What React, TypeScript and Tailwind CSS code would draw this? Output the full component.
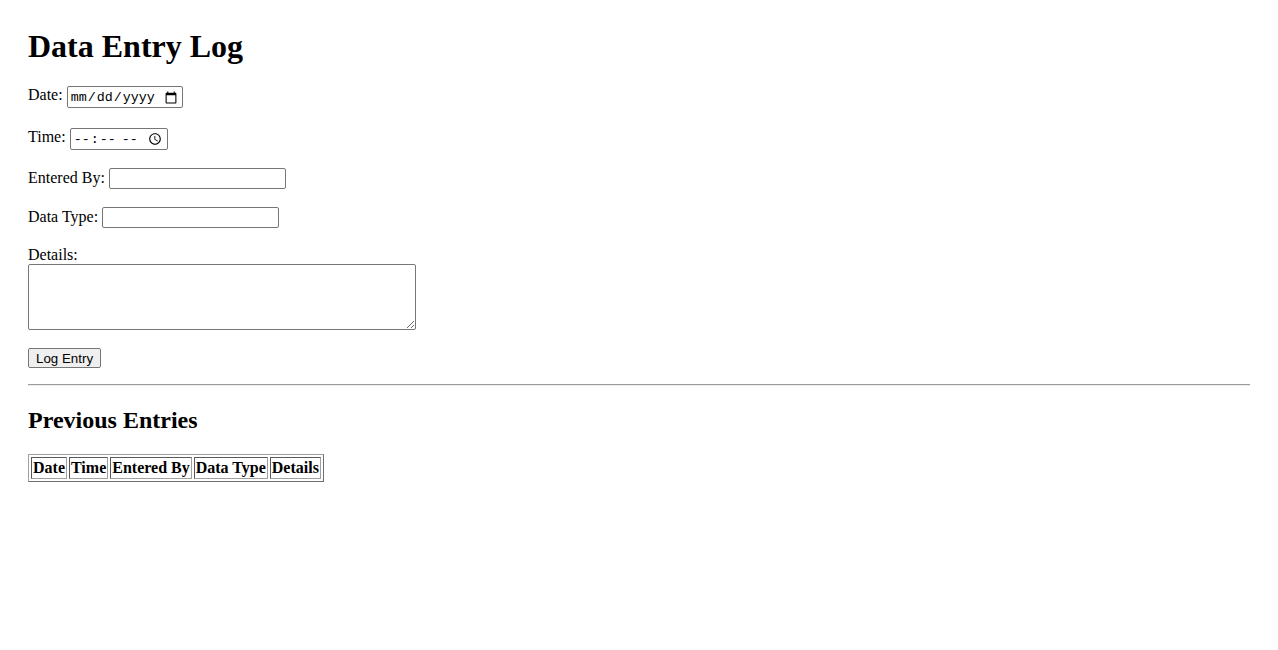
import React, { useState } from 'react';

type Entry = {
  date: string;
  time: string;
  enteredBy: string;
  dataType: string;
  details: string;
};

const boxBase =
  'border border-[#767676] rounded-[2px] bg-white text-black text-[13.333px] leading-[normal]';
const sansInput = boxBase + " font-['Liberation_Sans',Arial,sans-serif]";
const monoInput = boxBase + " font-['Liberation_Mono','Courier_New',monospace]";

export default function App() {
  const [entries, setEntries] = useState<Entry[]>([]);
  const [form, setForm] = useState<Entry>({
    date: '',
    time: '',
    enteredBy: '',
    dataType: '',
    details: ''
  });

  const handleSubmit = (e: React.FormEvent) => {
    e.preventDefault();
    setEntries([...entries, form]);
    setForm({ date: '', time: '', enteredBy: '', dataType: '', details: '' });
  };

  const cell =
    'border border-t-[#5a5a5a] border-l-[#5a5a5a] border-r-[#a0a0a0] border-b-[#a0a0a0] p-[1px]';

  return (
    <div className="min-h-screen bg-white text-black px-[28px] pt-[28px] font-['Liberation_Serif','Times_New_Roman',serif] text-[16px] leading-[normal]">
      <h1 className="text-[32px] font-bold leading-[normal] mb-[21.44px]">Data Entry Log</h1>

      <form onSubmit={handleSubmit}>
        <label>Date:</label>{' '}
        <input
          type="date"
          value={form.date}
          onChange={(e) => setForm({ ...form, date: e.target.value })}
          className={monoInput + ' w-[116px] h-[22px] px-[2px] mb-[2px]'}
        />
        <br />
        <br />
        <label>Time:</label>{' '}
        <input
          type="time"
          value={form.time}
          onChange={(e) => setForm({ ...form, time: e.target.value })}
          className={monoInput + ' w-[98px] h-[22px] px-[2px]'}
        />
        <br />
        <br />
        <label>Entered By:</label>{' '}
        <input
          type="text"
          value={form.enteredBy}
          onChange={(e) => setForm({ ...form, enteredBy: e.target.value })}
          className={sansInput + ' w-[177px] h-[21px] px-[2px] py-[1px]'}
        />
        <br />
        <br />
        <label>Data Type:</label>{' '}
        <input
          type="text"
          value={form.dataType}
          onChange={(e) => setForm({ ...form, dataType: e.target.value })}
          className={sansInput + ' w-[177px] h-[21px] px-[2px] py-[1px]'}
        />
        <br />
        <br />
        <label>Details:</label>
        <br />
        <textarea
          value={form.details}
          onChange={(e) => setForm({ ...form, details: e.target.value })}
          className={monoInput + ' w-[388px] h-[66px] p-[2px] resize align-bottom'}
        />
        <br />
        <br />
        <button
          type="submit"
          className="border border-[#767676] rounded-[2px] bg-[#efefef] h-[20px] px-[7px] text-[13.333px] leading-[normal] font-['Liberation_Sans',Arial,sans-serif] text-black"
        >
          Log Entry
        </button>
      </form>

      <hr className="mt-[16px] mb-[8px] h-0 border-0 border-t border-t-[#9a9a9a] border-b border-b-[#eeeeee]" />

      <h2 className="text-[24px] font-bold leading-[normal] mt-[20.92px] mb-[19.92px]">Previous Entries</h2>

      <table className="border-separate border-spacing-[2px] border border-t-[#a0a0a0] border-l-[#a0a0a0] border-r-[#6e6e6e] border-b-[#6e6e6e]">
        <thead>
          <tr>
            <th className={cell}>Date</th>
            <th className={cell}>Time</th>
            <th className={cell}>Entered By</th>
            <th className={cell}>Data Type</th>
            <th className={cell}>Details</th>
          </tr>
        </thead>
        <tbody>
          {entries.map((en, i) => (
            <tr key={i}>
              <td className={cell}>{en.date}</td>
              <td className={cell}>{en.time}</td>
              <td className={cell}>{en.enteredBy}</td>
              <td className={cell}>{en.dataType}</td>
              <td className={cell}>{en.details}</td>
            </tr>
          ))}
        </tbody>
      </table>
    </div>
  );
}
